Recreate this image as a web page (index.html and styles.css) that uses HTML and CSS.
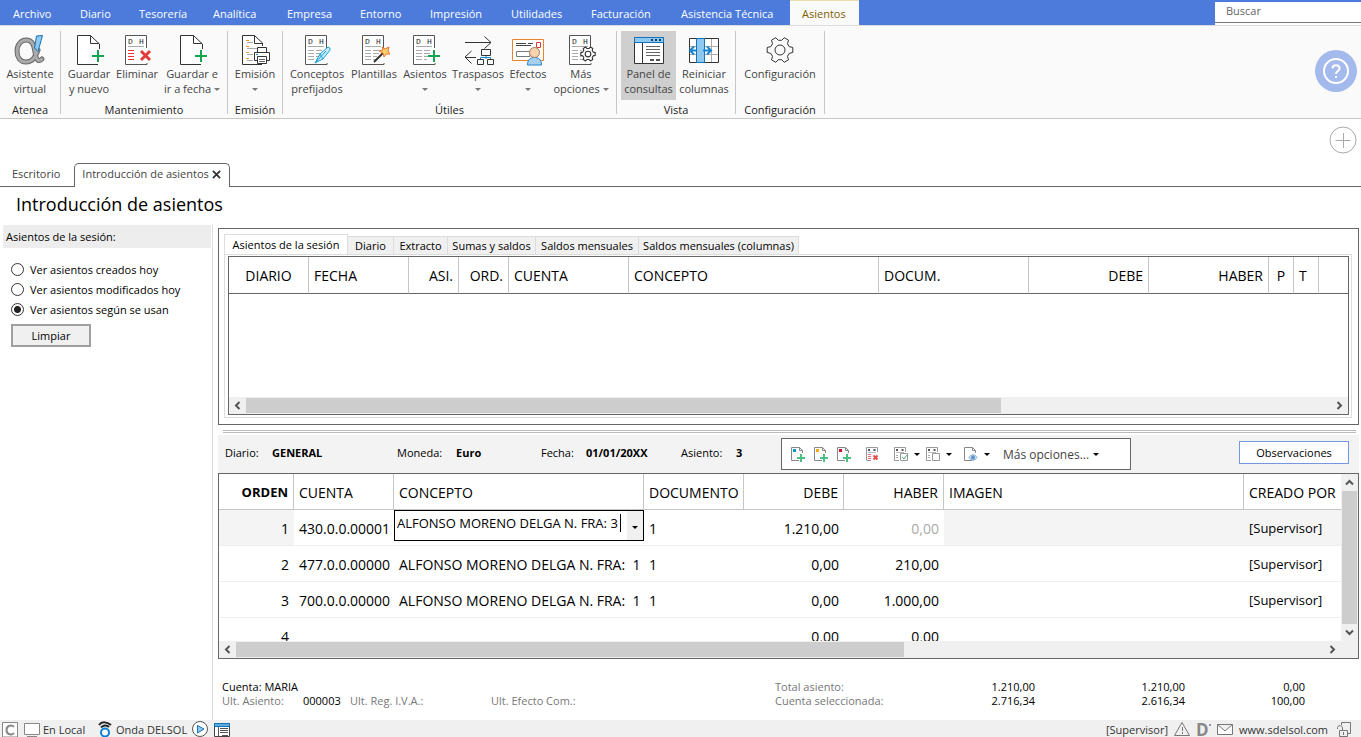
FILE: index.html
```html
<!DOCTYPE html>
<html lang="es">
<head>
<meta charset="utf-8">
<title>Introducción de asientos</title>
<link rel="stylesheet" href="styles.css">
</head>
<body>
<svg class="sprite" aria-hidden="true">
  <symbol id="page" viewBox="0 0 32 32">
    <path d="M26.500 15V10L17.500 1.500H4.500V30.500H25" fill="#fff" stroke="#333"/>
    <path d="M17.500 1.500V9.500H26" fill="none" stroke="#333"/>
  </symbol>
  <symbol id="plus" viewBox="0 0 32 32"><path d="M25 16V28M19 22H31" stroke="#12a650" stroke-width="2"/></symbol>
  <symbol id="ledger" viewBox="0 0 32 32">
    <path d="M25.500 14V1.500H4.500V30.500H26V29" fill="#fff" stroke="#555"/>
    <text x="7" y="10" class="dh">D</text><text x="18" y="10" class="dh">H</text>
    <path d="M7 12.500H23" stroke="#aaa"/>
  </symbol>
  <symbol id="lines" viewBox="0 0 32 32"><path d="M7 16.500H13M15 16.500H21M7 19.500H13M15 19.500H21M7 22.500H13M15 22.500H19M7 25.500H13M15 25.500H18" stroke="#aaa"/></symbol>
  <symbol id="gear" viewBox="0 0 32 32"><path d="M25.200 12.600L28.800 13.500V18.500L25.200 19.400L23.500 22.300L24.500 25.800L20.200 28.300L17.700 25.700H14.300L11.800 28.300L7.500 25.800L8.500 22.300L6.800 19.400L3.200 18.500V13.500L6.800 12.600L8.500 9.700L7.500 6.200L11.800 3.700L14.300 6.300H17.700L20.200 3.700L24.500 6.200L23.500 9.700Z" stroke-linejoin="round"/><circle cx="16" cy="16" r="5"/></symbol>
  <symbol id="mini" viewBox="0 0 16 16"><path d="M12.500 7V4.500L9.500 1.500H1.500V14.500H9M9.500 1.500V4.500H12.500" fill="none" stroke="#888"/></symbol>
  <symbol id="miniplus" viewBox="0 0 16 16"><path d="M11 8V16M7 12H15" stroke="#4cc080" stroke-width="2"/></symbol>
  <symbol id="miniledger" viewBox="0 0 16 16"><path d="M12.500 6V1.500H1.500V14.500H6" fill="none" stroke="#999"/><path d="M4 3v2M9.500 3v2" stroke="#555" stroke-width="2"/><path d="M3 6.500H11" stroke="#bbb"/></symbol>
</svg>

<nav class="menu">
  <a href="#">Archivo</a><a href="#">Diario</a><a href="#">Tesorería</a><a href="#">Analítica</a><a href="#">Empresa</a><a href="#">Entorno</a><a href="#">Impresión</a><a href="#">Utilidades</a><a href="#">Facturación</a><a href="#">Asistencia Técnica</a><a href="#" class="on">Asientos</a>
  <div class="search"><input type="search" aria-label="Buscar" placeholder="Buscar"></div>
</nav>

<header class="ribbon">
  <section class="group g-atenea">
    <div class="tools">
      <button><svg class="ico" viewBox="0 0 32 32"><g fill="none" stroke-linecap="round"><path d="M24 16C21 24 18 28 12 28C6 28 3 23 3 17C3 11 7 6 12 6C19 6 20 12 21 18C22 25 24 29 28 25" stroke="#666" stroke-width="5"/><path d="M24 16C21 24 18 28 12 28C6 28 3 23 3 17C3 11 7 6 12 6C19 6 20 12 21 18C22 25 24 29 28 25" stroke="#aaa" stroke-width="3"/></g><path d="M22.500 2L28.500 1.500L24 17.500L20.500 14Z" fill="#8cc8f0" stroke="#1673b8"/></svg><span>Asistente<br>virtual</span></button>
    </div><h2>Atenea</h2>
  </section>
  <section class="group g-mant">
    <div class="tools">
      <button><svg class="ico" viewBox="0 0 32 32"><use href="#page"/><use href="#plus"/></svg><span>Guardar<br>y nuevo</span></button>
      <button><svg class="ico" viewBox="0 0 32 32"><use href="#ledger"/><path d="M7 16.500H13M7 19.500H13M7 22.500H13M7 25.500H13" stroke="#e33" /><path d="M20 17L29 26M29 17L20 26" stroke="#e23b3b" stroke-width="3"/></svg><span>Eliminar</span></button>
      <button><svg class="ico" viewBox="0 0 32 32"><use href="#page"/><use href="#plus"/></svg><span>Guardar e<br>ir a fecha <i class="caret"></i></span></button>
    </div><h2>Mantenimiento</h2>
  </section>
  <section class="group g-emi">
    <div class="tools">
      <button><svg class="ico" viewBox="0 0 32 32"><path d="M23.500 12V9L15.500 1.500H3.500V30.500H23" fill="#fff" stroke="#333"/><path d="M15.500 1.500V9.500H23.500" fill="none" stroke="#333"/><path d="M7 6.500H10M7 12.500H10M7 18.500H10M7 24.500H10" stroke="#f39a1e"/><path d="M8 8.500H14M8 14.500H18M8 20.500H14M8 26.500H14" stroke="#aaa"/><path d="M18.500 18V13.500H27.500V18M18 26.500H15.500V18.500H30.500V26.500H28" fill="#fff" stroke="#333"/><path d="M18.500 22.500H27.500V29.500H18.500Z" fill="#fff" stroke="#333"/><path d="M20 25.500H26M20 27.500H26" stroke="#666"/><path d="M17 20.500H19" stroke="#1b86d8"/></svg><span>Emisión<br><i class="caret"></i></span></button>
    </div><h2>Emisión</h2>
  </section>
  <section class="group g-util">
    <div class="tools">
      <button><svg class="ico" viewBox="0 0 32 32"><use href="#ledger"/><use href="#lines"/><path d="M14 29L19 20L27 13Q30 14 29 16L22 25Z" fill="#c8ecfb" stroke="#18a0dc"/><path d="M14 29L25 17M19 20L22 25" stroke="#18a0dc"/></svg><span>Conceptos<br>prefijados</span></button>
      <button><svg class="ico" viewBox="0 0 32 32"><use href="#ledger"/><use href="#lines"/><path d="M16 28L25 19" stroke="#333" stroke-width="2"/><path d="M24 13L27 15L31 13L30 17L32 20L28 20L26 23L25 19L21 17L25 16Z" fill="#fbcf6b" stroke="#e8772e"/></svg><span>Plantillas</span></button>
      <button><svg class="ico" viewBox="0 0 32 32"><use href="#ledger"/><use href="#lines"/><use href="#plus"/></svg><span>Asientos<br><i class="caret"></i></span></button>
      <button><svg class="ico" viewBox="0 0 32 32"><path d="M3 8.500H29M22.500 2.500L29 8.500L22.500 14.500M9.500 17L3 23L9.500 29.500M3 23.500H14M19.500 15.500H28.500V21.500H19.500ZM15.500 25.500H21.500V30.500H15.500ZM25.500 25.500H31.500V30.500H25.500Z" fill="none" stroke="#333"/><path d="M24 22V25M18.500 25V23.500H28.500V25" fill="none" stroke="#1b8bd8"/></svg><span>Traspasos<br><i class="caret"></i></span></button>
      <button><svg class="ico" viewBox="0 0 32 32"><path d="M.5 5.500H31.500V26.500H.5Z" fill="#fff" stroke="#e8842c"/><path d="M4 9.500H14M4 11.500H19M16 9.500H21" stroke="#444"/><path d="M4.500 17.500H18V22.500H4.500Z" fill="none" stroke="#777"/><path d="M24.500 8.500H28.500V13.500H24.500Z" fill="none" stroke="#e23b3b"/><path d="M15.500 31C15.500 25 19 23.500 22.500 23.500S29.500 25 29.500 31Z" fill="#a6cff0" stroke="#2b86c8"/><circle cx="22.500" cy="18.500" r="5" fill="#f8d3b0" stroke="#a87c5a"/></svg><span>Efectos<br><i class="caret"></i></span></button>
      <button><svg class="ico" viewBox="0 0 32 32"><use href="#ledger"/><use href="#lines"/><circle cx="23" cy="20" r="7" fill="#fff"/><use href="#gear" x="14" y="11" width="18" height="18" fill="none" stroke="#333" stroke-width="2"/></svg><span>Más<br>opciones <i class="caret"></i></span></button>
    </div><h2>Útiles</h2>
  </section>
  <section class="group g-vista">
    <div class="tools">
      <button class="pressed"><svg class="ico" viewBox="0 0 32 32"><path d="M1.500 3.500H30.500V29.500H1.500Z" fill="#fff" stroke="#333"/><path d="M1.500 3.500H30.500V8.500H1.500Z" fill="#8cc8f0" stroke="#1673b8"/><path d="M18 6H20M22 6H24M26 6H28" stroke="#123c60" stroke-width="2"/><path d="M9.500 9V29" stroke="#333"/><path d="M13 12.500H27M13 15.500H27M13 18.500H27M13 21.500H27" stroke="#666"/><path d="M17 26H21M23 26H27" stroke="#555" stroke-width="2"/></svg><span>Panel de<br>consultas</span></button>
      <button><svg class="ico" viewBox="0 0 32 32"><path d="M1.500 4.500H30.500V28.500H1.500Z" fill="#fff" stroke="#333"/><path d="M2 12.500H30M2 20.500H30M23.500 5V28" stroke="#aaa"/><path d="M8.500 4.500H16.500V28.500H8.500Z" fill="#8cc8f0" stroke="#1673b8"/><path d="M8 16.500H2.500M6 12.500L2 16.500L6 20.500M15 16.500H22M19 12.500L23 16.500L19 20.500" fill="none" stroke="#1a84d0" stroke-width="2"/></svg><span>Reiniciar<br>columnas</span></button>
    </div><h2>Vista</h2>
  </section>
  <section class="group g-conf">
    <div class="tools">
      <button><svg class="ico" viewBox="0 0 32 32"><use href="#gear" fill="none" stroke="#333"/></svg><span>Configuración</span></button>
    </div><h2>Configuración</h2>
  </section>
  <button class="help" aria-label="Ayuda"><svg viewBox="0 0 42 42"><circle cx="21" cy="21" r="21" fill="#a4b9ec"/><g fill="none" stroke="#fff" stroke-width="2"><circle cx="21" cy="21" r="12"/><path d="M17.500 18.500C17.500 14 24.500 14 24.500 18.500C24.500 21 21 21 21 24"/><path d="M21 26V28"/></g></svg></button>
</header>

<div class="docs">
  <button class="add" aria-label="Añadir"><svg viewBox="0 0 28 28" fill="none" stroke="#aaa"><circle cx="14" cy="14" r="13"/><path d="M6.500 14.500H21.500M14.500 7V22"/></svg></button>
  <div class="doctabs">
    <a href="#">Escritorio</a>
    <a href="#" class="on">Introducción de asientos <svg viewBox="0 0 10 10" class="x"><path d="M1 1L9 9M9 1L1 9" stroke="#333" stroke-width="2"/></svg></a>
    <span class="rest"></span>
  </div>
</div>

<h1>Introducción de asientos</h1>

<div class="work">
  <aside>
    <h3>Asientos de la sesión:</h3>
    <label><input type="radio" name="ver">Ver asientos creados hoy</label>
    <label><input type="radio" name="ver">Ver asientos modificados hoy</label>
    <label><input type="radio" name="ver" checked>Ver asientos según se usan</label>
    <button class="clean">Limpiar</button>
  </aside>

  <main>
    <section class="query">
      <div class="qtabs">
        <button class="on">Asientos de la sesión</button><button>Diario</button><button>Extracto</button><button>Sumas y saldos</button><button>Saldos mensuales</button><button>Saldos mensuales (columnas)</button>
      </div>
      <div class="qpage"><div class="qgrid">
        <table class="grid">
          <colgroup><col class="w80"><col class="w100"><col class="w50"><col class="w50"><col class="w120"><col class="w250"><col class="w150"><col class="w120"><col class="w120"><col class="w25"><col class="w25"><col></colgroup>
          <thead><tr><th class="c">DIARIO</th><th>FECHA</th><th class="r">ASI.</th><th class="r">ORD.</th><th>CUENTA</th><th>CONCEPTO</th><th>DOCUM.</th><th class="r">DEBE</th><th class="r">HABER</th><th class="c">P</th><th>T</th><th></th></tr></thead>
        </table>
        <div class="fill"></div>
        <div class="hbar"><svg viewBox="0 0 17 17"><path d="M10.500 5L7 8.500L10.500 12"/></svg><span class="thumb q"></span><svg viewBox="0 0 17 17" class="end"><path d="M6.500 5L10 8.500L6.500 12"/></svg></div>
      </div></div>
    </section>

    <div class="split"></div>

    <section class="info">
      <dl><dt>Diario:</dt><dd>GENERAL</dd><dt>Moneda:</dt><dd>Euro</dd><dt>Fecha:</dt><dd>01/01/20XX</dd><dt>Asiento:</dt><dd>3</dd></dl>
      <div class="bar">
        <button aria-label="Nuevo azul"><svg viewBox="0 0 16 16"><use href="#mini"/><path d="M3 3H6V6H3Z" fill="#0a96dc"/><use href="#miniplus"/></svg></button>
        <button aria-label="Nuevo amarillo"><svg viewBox="0 0 16 16"><use href="#mini"/><path d="M3 3H6V6H3Z" fill="#f5a81c"/><use href="#miniplus"/></svg></button>
        <button aria-label="Nuevo rojo"><svg viewBox="0 0 16 16"><use href="#mini"/><path d="M3 3H6V6H3Z" fill="#d8102c"/><use href="#miniplus"/></svg></button>
        <button class="gap" aria-label="Eliminar línea"><svg viewBox="0 0 16 16"><use href="#miniledger"/><path d="M3 8.500H6M3 10.500H6M3 12.500H6" stroke="#e66"/><path d="M8.500 9.500L12.500 13.500M12.500 9.500L8.500 13.500" stroke="#e84c4c" stroke-width="2"/></svg></button>
        <button class="drop" aria-label="Validar"><svg viewBox="0 0 16 16"><use href="#miniledger"/><path d="M3 9.500H5M3 11.500H5" stroke="#aaa"/><path d="M7.500 7.500H14.500V14.500H7.500Z" fill="#fff" stroke="#999"/><path d="M9 11L11 13L14 9" fill="none" stroke="#3fae72"/></svg><i class="caret k"></i></button>
        <button class="drop2" aria-label="Marcar"><svg viewBox="0 0 16 16"><use href="#miniledger"/><path d="M3 9.500H5M3 11.500H5" stroke="#aaa"/><path d="M7.500 7.500H14.500V14.500H7.500Z" fill="#fff" stroke="#999"/></svg><i class="caret k"></i></button>
        <button class="drop" aria-label="Ver"><svg viewBox="0 0 16 16"><use href="#mini"/><path d="M6 11.500C8 8 12 8 14 11.500C12 15 8 15 6 11.500Z" fill="#d6e8f6" stroke="#7aa8cf"/><circle cx="10" cy="11.500" r="2" fill="#5a94c8"/></svg><i class="caret k"></i></button>
        <button class="more">Más opciones... <i class="caret k"></i></button>
      </div>
      <button class="obs">Observaciones</button>
    </section>

    <section class="entries">
      <div class="clip">
        <table class="grid rows">
          <colgroup><col class="w75"><col class="w100"><col class="w250"><col class="w100"><col class="w100"><col class="w100"><col><col class="w97"></colgroup>
          <thead><tr><th class="r"><b>ORDEN</b></th><th>CUENTA</th><th>CONCEPTO</th><th>DOCUMENTO</th><th class="r">DEBE</th><th class="r">HABER</th><th>IMAGEN</th><th>CREADO POR</th></tr></thead>
          <tbody>
            <tr><td class="r sh">1</td><td>430.0.0.00001</td><td class="edit"><div class="combo"><input type="text" aria-label="Concepto" value="ALFONSO MORENO DELGA N. FRA: 3"><button aria-label="Desplegar"><i class="caret k"></i></button></div></td><td>1</td><td class="r">1.210,00</td><td class="r dim">0,00</td><td class="sh"></td><td class="sh who">[Supervisor]</td></tr>
            <tr><td class="r">2</td><td>477.0.0.00000</td><td>ALFONSO MORENO DELGA N. FRA:&nbsp; 1</td><td>1</td><td class="r">0,00</td><td class="r">210,00</td><td></td><td class="who">[Supervisor]</td></tr>
            <tr><td class="r">3</td><td>700.0.0.00000</td><td>ALFONSO MORENO DELGA N. FRA:&nbsp; 1</td><td>1</td><td class="r">0,00</td><td class="r">1.000,00</td><td></td><td class="who">[Supervisor]</td></tr>
            <tr><td class="r">4</td><td></td><td></td><td></td><td class="r">0,00</td><td class="r">0,00</td><td></td><td></td></tr>
          </tbody>
        </table>
      </div>
      <div class="vbar"><svg viewBox="0 0 17 17"><path d="M5 10.500L8.500 7L12 10.500"/></svg><span class="vthumb"></span><svg viewBox="0 0 17 17"><path d="M5 6.500L8.500 10L12 6.500"/></svg></div>
      <div class="hbar"><svg viewBox="0 0 17 17"><path d="M10.500 5L7 8.500L10.500 12"/></svg><span class="thumb e"></span><svg viewBox="0 0 17 17" class="end"><path d="M6.500 5L10 8.500L6.500 12"/></svg></div>
      <div class="corner"></div>
    </section>

    <section class="totals">
      <span class="acc">Cuenta: MARIA</span><em>Total asiento:</em><span class="r">1.210,00</span><span class="r">1.210,00</span><span class="r">0,00</span>
      <em>Ult. Asiento:</em><span>000003</span><em>Ult. Reg. I.V.A.:</em><em>Ult. Efecto Com.:</em><em>Cuenta seleccionada:</em><span class="r">2.716,34</span><span class="r">2.616,34</span><span class="r">100,00</span>
    </section>
  </main>
</div>

<footer class="status">
  <svg viewBox="0 0 16 16"><path d="M.5 1.500H15.500V16H.5Z" fill="#fff" stroke="#888"/><path d="M12 6C10 3.500 4.500 4 4.500 9S10 14.500 12 12" fill="none" stroke="#888" stroke-width="2"/></svg>
  <svg class="mon" viewBox="0 0 16 16"><path d="M.5 2.500H15.500V13.500H.5ZM3 15.500H13" fill="#fff" stroke="#888"/></svg>
  <span class="loc">En Local</span>
  <svg viewBox="0 0 16 16"><path d="M2 4C5 0 10 1 14 4M4 6.500C6 4 10 4 12 6" fill="none" stroke="#222" stroke-width="2"/><circle cx="8" cy="11.500" r="4" fill="#fff" stroke="#0a7fd8" stroke-width="2"/></svg>
  <span class="onda">Onda DELSOL</span>
  <svg viewBox="0 0 16 16"><circle cx="8" cy="8" r="7.500" fill="#fff" stroke="#555"/><path d="M5.500 4.500L12 8L5.500 12Z" fill="#8cc8f0" stroke="#1673b8"/></svg>
  <svg class="win" viewBox="0 0 16 16"><path d="M.5 2.500H15.500V15.500H.5Z" fill="#fff" stroke="#444"/><path d="M1 3H15V5H1Z" fill="#5fabdf"/><path d="M.5 2.500H15.500V5.500H.5Z" fill="none" stroke="#1673b8"/><path d="M4.500 6V15M6 7.500H14M6 9.500H14M6 11.500H14M8 14.500H14" stroke="#555"/></svg>
  <span class="sup">[Supervisor]</span>
  <svg viewBox="0 0 16 16"><path d="M8 1.500L15.500 14.500H.5Z" fill="none" stroke="#777"/><path d="M8.500 6V10M8.500 11V13" stroke="#777"/></svg>
  <strong>D</strong>
  <svg viewBox="0 0 16 16"><path d="M.5 3.500H15.500V13.500H.5ZM.5 3.500L8 10L15.500 3.500" fill="#fff" stroke="#777"/></svg>
  <a href="#">www.sdelsol.com</a>
  <svg class="lock" viewBox="0 0 16 16"><path d="M5.500 4V1.500H14.500V12.500H11" fill="none" stroke="#777"/><path d="M1.500 8V6.500C1.500 4 6.500 4 6.500 7V9M3.500 9.500H11.500V15.500H3.500ZM7.500 11V14" fill="none" stroke="#777"/></svg>
</footer>
</body>
</html>
```

FILE: styles.css
```css
* { box-sizing: border-box; }
body {
  margin: 0;
  height: 100vh;
  display: flex;
  flex-direction: column;
  background: #fff;
  color: #000;
  font: 11px/15px "Open Sans", "Noto Sans", sans-serif;
  overflow: hidden;
}
button { font: inherit; color: inherit; background: none; border: 0; padding: 0; margin: 0; }
a { color: inherit; text-decoration: none; }
h1, h2, h3, dl, dd { margin: 0; font-weight: normal; }
h2, h3 { font-size: 11px; }
em { font-style: normal; color: #777; }
.sprite { display: none; }
.dh { font: 8px "Liberation Mono", monospace; fill: #222; }

.menu { display: grid; grid-template-columns: 66px 59px 74px 74px 73px 70px 81px 80px 90px 123px 69px 1fr; height: 25px; background: #4c7bdb; color: #fff; }
.menu a { padding-left: 14px; line-height: 27px; white-space: nowrap; }
.menu a:first-child { padding-left: 13px; }
.menu .on { background: #fafafa; color: #7f6000; padding-left: 12px; border-top: 1px solid #e8dca8; line-height: 25px; }
.search { margin: 2px 0 0 auto; width: 146px; background: #fff; }
.search input { display: block; width: 100%; height: 21px; padding: 0 11px 3px; border: 0; border-bottom: 1px solid #777; border-radius: 0; outline: 0; background: #fff; font: inherit; appearance: none; }
.search input::placeholder { color: #666; }

.ribbon { display: flex; height: 94px; padding: 5px 0 4px; background: #fafafa; border-top: 1px solid #ddd; border-bottom: 1px solid #c6c6c6; color: #444; }
.group { display: flex; flex-direction: column; justify-content: space-between; border-right: 1px solid #c6c6c6; }
.group h2 { text-align: center; color: #222; line-height: 8px; }
.tools { display: grid; }
.tools button { display: flex; flex-direction: column; align-items: center; justify-content: flex-start; height: 69px; padding-top: 3px; white-space: nowrap; }
.tools .ico { flex: none; width: 32px; height: 32px; }
.pressed { background: #cfcfcf; }
.g-atenea { width: 61px; }
.g-mant .tools { grid-template-columns: 56px 40px 70px; }
.g-emi .tools { grid-template-columns: 54px; }
.g-util .tools { grid-template-columns: 68px 46px 56px 50px 50px 56px; padding-right: 7px; }
.g-vista .tools { grid-template-columns: 55px 56px; padding: 0 3px 0 4px; }
.g-conf .tools { grid-template-columns: 88px; }
.caret { display: inline-block; border: 3px solid transparent; border-top-color: #777; border-bottom: 0; vertical-align: 2px; }
.caret.k { border-top-color: #000; }
.help { margin: 19px 4px 0 auto; width: 42px; height: 42px; }
.help svg, .add svg { display: block; width: 100%; }

.docs { height: 68px; display: flex; flex-direction: column; justify-content: space-between; }
.add { align-self: flex-end; width: 28px; height: 28px; margin: 7px 4px 0 0; }
.doctabs { display: flex; height: 24px; line-height: 22px; color: #444; }
.doctabs a { border-bottom: 1px solid #666; padding: 0 14px 0 12px; }
.doctabs .on { border: 1px solid #666; border-bottom: 0; border-radius: 5px 5px 0 0; padding: 0 8px 0 7px; line-height: 20px; }
.doctabs .rest { flex: 1; border-bottom: 1px solid #666; }
.x { width: 9px; height: 9px; vertical-align: -1px; }
h1 { font-size: 18px; line-height: 34px; height: 38px; padding-left: 16px; }

.work { flex: 1; display: flex; min-height: 0; }
aside { flex: none; width: 213px; border-right: 1px solid #ddd; display: flex; flex-direction: column; }
aside h3 { height: 23px; margin: 0 1px 11px 3px; padding-left: 3px; line-height: 23px; background: #ededed; }
aside label { display: flex; align-items: center; height: 20px; padding-left: 11px; gap: 6px; }
aside input { margin: 0; width: 13px; height: 13px; appearance: none; border: 1px solid #333; border-radius: 50%; background: #fff; }
aside input:checked { background: radial-gradient(#222 0 3px, #fff 4px); }
.clean { width: 80px; height: 23px; margin: 5px 0 0 11px; border: 2px solid #a0a0a0; background: #f0f0f0; }

main { flex: 1; min-width: 0; display: flex; flex-direction: column; padding: 3px 2px 0 5px; }
.query { flex: 1; display: flex; flex-direction: column; border: 1px solid #666; padding: 5px 6px 6px 5px; }
.qtabs { display: grid; grid-template-columns: 124px 46px 54px 88px 103px 160px; align-items: end; height: 20px; }
.qtabs button { height: 18px; background: #f0f0f0; border: 1px solid #ddd; border-left: 0; border-bottom: 0; white-space: nowrap; }
.qtabs .on { height: 20px; background: #fff; border-left: 1px solid #ddd; }
.qpage { flex: 1; display: flex; border: 1px solid #ddd; padding: 1px 2px 2px 3px; }
.qgrid { flex: 1; display: flex; flex-direction: column; border: 1px solid #666; }
.qgrid .grid th { border-bottom-color: #666; height: 37px; padding-top: 0; }
.fill { flex: 1; }

.grid { width: 100%; table-layout: fixed; border-collapse: separate; border-spacing: 0; font-size: 14px; }
.grid th, .grid td { height: 36px; padding: 1px 5px 0; text-align: left; font-weight: normal; white-space: nowrap; }
.grid th { border-right: 1px solid #c6c6c6; border-bottom: 1px solid #c6c6c6; }
.grid th:last-child { border-right: 0; }
.grid td { border-bottom: 1px solid #eee; }
.grid .r { text-align: right; }
.grid .c { text-align: center; }
.grid b, .grid .who { font-size: 13px; }
.w25 { width: 25px; } .w50 { width: 50px; } .w75 { width: 75px; } .w80 { width: 80px; } .w97 { width: 97px; } .w100 { width: 100px; }
.w120 { width: 120px; } .w150 { width: 150px; } .w250 { width: 250px; }
.sh { background: #f4f4f4; }
.grid .dim { color: #aaa; }
.grid .edit { padding: 0; vertical-align: top; }
.combo { display: flex; height: 31px; border: 1px solid #000; }
.combo input { width: 226px; height: 18px; margin: 3px auto 0 0; padding: 0 0 0 2px; border: 0; border-right: 1px solid #000; outline: 0; font: 13px/18px "Open Sans", "Noto Sans", sans-serif; }
.combo button { width: 16px; background: #f0f0f0; }

.hbar, .vbar { background: #f0f0f0; display: flex; }
.hbar { height: 17px; }
.hbar svg, .vbar svg { flex: none; width: 17px; height: 17px; fill: none; stroke: #555; stroke-width: 2; }
.end { margin-left: auto; }
.thumb { height: 15px; margin-top: 1px; background: #cdcdcd; }
.q { width: 67.5%; }
.e { width: 59.5%; }

.split { height: 3px; margin: 5px 3px 2px 5px; border: 1px solid #bbb; border-width: 1px 0; }
.info { display: flex; align-items: center; height: 38px; background: #f3f3f3; padding: 0 10px 0 7px; }
.info dl { display: grid; grid-template-columns: 47px 125px 59px 85px 45px 95px 55px 45px; margin-bottom: 3px; }
.info dd { font-weight: bold; }
.bar { display: flex; align-items: center; width: 350px; height: 32px; border: 1px solid #666; background: #fff; padding-left: 8px; gap: 7px; color: #444; }
.bar button { display: flex; align-items: center; white-space: nowrap; }
.bar svg { width: 16px; height: 16px; }
.bar .gap { margin: 0 5px 0 6px; }
.bar .drop, .bar .drop2 { gap: 5px; }
.bar .drop2 { margin: 0 4px 0 -2px; }
.bar .more { margin-left: 6px; gap: 4px; font-size: 12px; }
.obs { width: 110px; height: 23px; margin: 0 0 3px auto; border: 1px solid #7497e0; background: #fff; }

.entries { display: grid; grid-template: 167px 17px / 1fr 17px; border: 1px solid #666; }
.clip { overflow: hidden; }
.vbar { flex-direction: column; padding-right: 1px; }
.vthumb { flex: 1; margin-left: 1px; background: #cdcdcd; }
.corner { background: #f0f0f0; }

.totals { display: grid; grid-template-columns: 81px 47px 141px 1fr 140px 120px 150px 120px; height: 61px; padding: 21px 54px 0 4px; line-height: 14px; align-content: start; white-space: nowrap; }
.acc { grid-column: span 4; }
.totals .r { text-align: right; }

.status { display: flex; height: 17px; padding: 1px 9px 0 2px; background: #f0f0f0; color: #333; line-height: 18px; white-space: nowrap; overflow: hidden; }
.status svg { flex: none; width: 16px; height: 16px; }
.status .mon { margin: 0 3px 0 6px; }
.loc { width: 54px; }
.onda { width: 79px; padding-left: 3px; }
.win { margin-left: 6px; }
.sup { margin: 0 6px 0 auto; }
.status strong { display: flex; width: 27px; padding-left: 6px; font-size: 17px; color: #888; }
.status strong::after { content: ""; width: 2px; height: 2px; margin-top: 3px; background: #999; }
.status a { margin-left: 6px; width: 97px; }
```
